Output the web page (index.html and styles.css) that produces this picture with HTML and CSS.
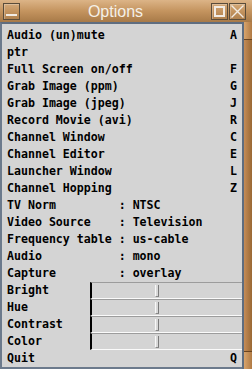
FILE: index.html
```html
<!DOCTYPE html>
<html lang="en">
<head>
    <meta charset="UTF-8">
    <title>Options</title>
    <link rel="stylesheet" href="styles.css">
</head>
<body>
    <div class="window">
        <div class="titlebar">
            <span class="btn btn-min"><span class="bar"></span></span>
            <span class="title">Options</span>
            <span class="btn btn-max"><span class="box"></span></span>
            <span class="btn btn-close">
                <svg width="13" height="13" viewBox="0 0 13 13">
                    <path d="M0.5 0.5 L12.5 12.5 M12.5 0.5 L0.5 12.5" stroke="#f2ece4" stroke-width="1.4" fill="none"/>
                </svg>
            </span>
        </div>
        <div class="frame">
            <div class="menu">
                <div class="item"><span>Audio (un)mute</span><span>A</span></div>
                <div class="item"><span>ptr</span></div>
                <div class="item"><span>Full Screen on/off</span><span>F</span></div>
                <div class="item"><span>Grab Image (ppm)</span><span>G</span></div>
                <div class="item"><span>Grab Image (jpeg)</span><span>J</span></div>
                <div class="item"><span>Record Movie (avi)</span><span>R</span></div>
                <div class="item"><span>Channel Window</span><span>C</span></div>
                <div class="item"><span>Channel Editor</span><span>E</span></div>
                <div class="item"><span>Launcher Window</span><span>L</span></div>
                <div class="item"><span>Channel Hopping</span><span>Z</span></div>
                <div class="item info"><span class="key">TV Norm</span><span>: NTSC</span></div>
                <div class="item info"><span class="key">Video Source</span><span>: Television</span></div>
                <div class="item info"><span class="key">Frequency table</span><span>: us-cable</span></div>
                <div class="item info"><span class="key">Audio</span><span>: mono</span></div>
                <div class="item info"><span class="key">Capture</span><span>: overlay</span></div>
                <div class="item scale-row"><span class="label">Bright</span><div class="scale"><div class="thumb"></div></div></div>
                <div class="item scale-row"><span class="label">Hue</span><div class="scale"><div class="thumb"></div></div></div>
                <div class="item scale-row"><span class="label">Contrast</span><div class="scale"><div class="thumb"></div></div></div>
                <div class="item scale-row"><span class="label">Color</span><div class="scale"><div class="thumb"></div></div></div>
                <div class="item"><span>Quit</span><span>Q</span></div>
            </div>
            <div class="edge">
                <div class="edge-cap"></div>
                <div class="edge-mid"></div>
                <div class="edge-cap"></div>
            </div>
        </div>
    </div>
</body>
</html>
```

FILE: styles.css
```css
body {
    margin: 0;
    background: #d4d4d4;
}
.window {
    width: 252px;
    height: 369px;
    display: flex;
    flex-direction: column;
}
.titlebar {
    height: 22px;
    box-sizing: border-box;
    padding: 3px 6px 0 3px;
    display: flex;
    align-items: flex-start;
    background: linear-gradient(#dcb487, #c4945f 50%, #a87a48);
}
.title {
    flex: 1;
    text-align: center;
    font-family: "Liberation Sans", Arial, sans-serif;
    font-size: 16px;
    line-height: 17px;
    color: #f4f0e8;
}
.btn {
    width: 17px;
    height: 17px;
    box-sizing: border-box;
    border: 1px solid #5a4c3a;
    box-shadow: inset 1px 1px 0 rgba(255, 255, 255, 0.25);
    display: flex;
    align-items: center;
    justify-content: center;
}
.btn-min {
    align-items: flex-end;
    padding-bottom: 3px;
}
.btn-min .bar {
    width: 11px;
    height: 2px;
    background: #f2ece4;
}
.btn-max .box {
    width: 11px;
    height: 11px;
    box-sizing: border-box;
    border: 2px solid #f2ece4;
}
.btn-close {
    margin-left: 1px;
}
.frame {
    flex: 1;
    display: flex;
}
.menu {
    width: 242px;
    box-sizing: border-box;
    background: #d4d4d4;
    border-top: 2px solid #5f6d80;
    border-left: 2px solid #6c7a8c;
    border-bottom: 2px solid #6c7a8c;
    padding-top: 3px;
    font-family: "DejaVu Sans Mono", "Liberation Mono", monospace;
    font-weight: bold;
    font-size: 11.6px;
    color: #000;
}
.item {
    height: 17px;
    line-height: 17px;
    padding: 0 5px;
    display: flex;
    justify-content: space-between;
    white-space: pre;
}
.info {
    justify-content: flex-start;
}
.key {
    width: 16ch;
}
.scale-row {
    padding-right: 0;
}
.label {
    width: 83px;
}
.scale {
    flex: 1;
    height: 17px;
    box-sizing: border-box;
    border-left: 2px solid #000;
    border-top: 1px solid #9c9c9c;
    border-bottom: 1px solid #fafafa;
    padding-left: 63px;
    display: flex;
    align-items: center;
}
.thumb {
    width: 4px;
    height: 12px;
    box-sizing: border-box;
    background: #d8d8d8;
    border-left: 1px solid #f8f8f8;
    border-right: 1px solid #7a7a7a;
    border-bottom: 1px solid #8a8a8a;
}
.edge {
    width: 10px;
    box-sizing: border-box;
    border-left: 2px solid #5f6d80;
    display: flex;
    flex-direction: column;
    background: linear-gradient(90deg, #c48c58, #9a6834);
}
.edge-cap {
    height: 17px;
    background: linear-gradient(90deg, #d8a46c, #b07a44);
}
.edge-mid {
    flex: 1;
    border-top: 1px solid #6a4420;
    border-bottom: 1px solid #6a4420;
}
```
